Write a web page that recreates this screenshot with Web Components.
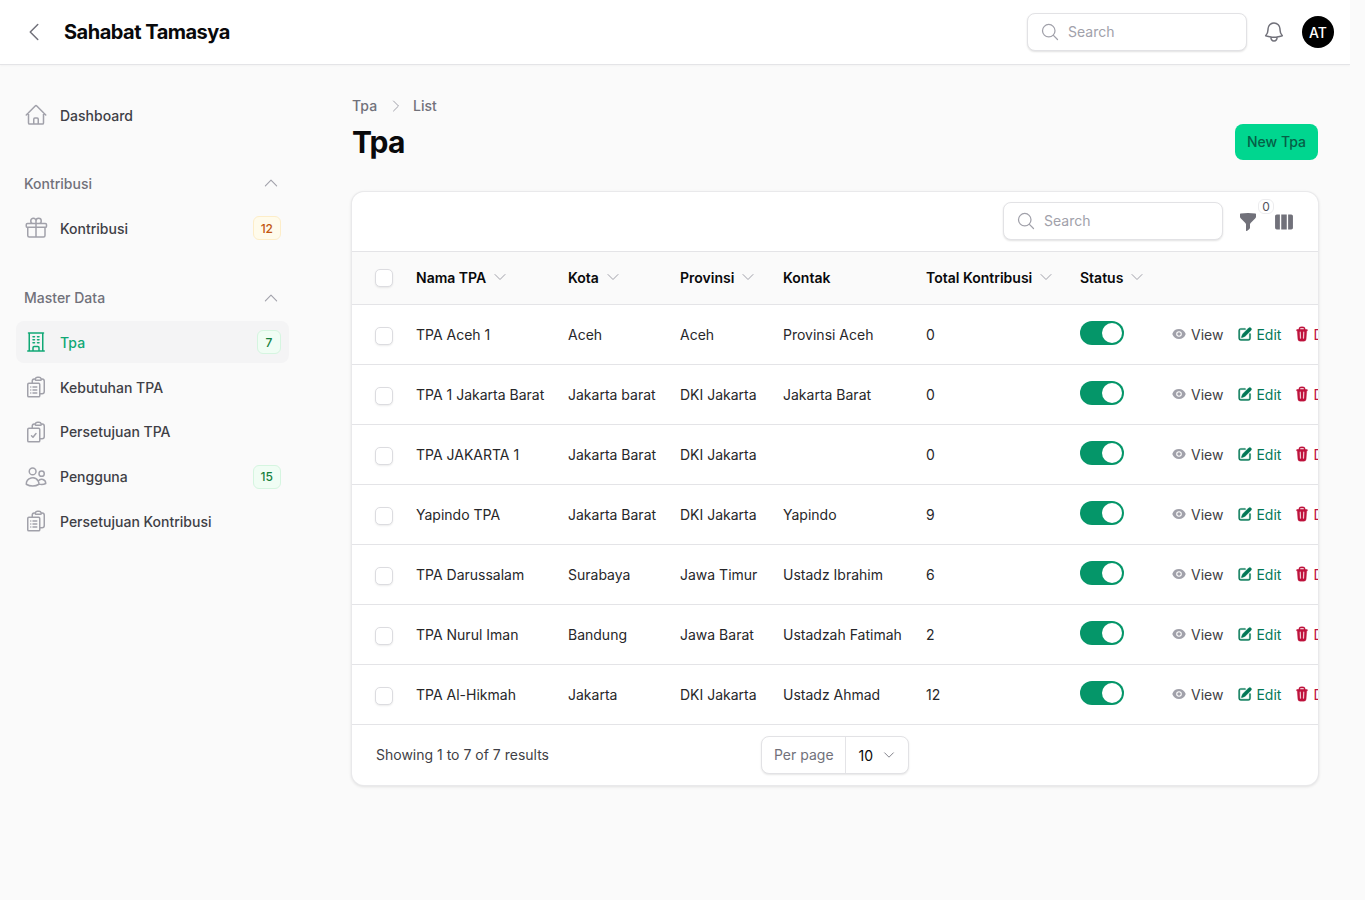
<!DOCTYPE html>
<html lang="id">
<head>
<meta charset="utf-8">
<title>Tpa</title>
<style>
  html, body { margin: 0; padding: 0; background: #fafafa; }
  body { font-family: Inter, "Liberation Sans", sans-serif; font-size: 14px; color: #09090b; width: 1350px; overflow: hidden; height: 900px; }
</style>
</head>
<body>
<app-shell>
  <top-bar slot="top" brand="Sahabat Tamasya" initials="AT"></top-bar>
  <side-nav slot="side">
    <nav-item icon="home" style="margin-bottom:25px">Dashboard</nav-item>
    <nav-group label="Kontribusi">
      <nav-item icon="gift" badge="12" tone="warn" style="margin-top:.5px;margin-bottom:2.25px">Kontribusi</nav-item>
    </nav-group>
    <nav-group label="Master Data">
      <nav-item icon="office" badge="7" tone="ok" active>Tpa</nav-item>
      <nav-item icon="cliplist">Kebutuhan TPA</nav-item>
      <nav-item icon="clipcheck">Persetujuan TPA</nav-item>
      <nav-item icon="users" badge="15" tone="ok">Pengguna</nav-item>
      <nav-item icon="cliplist">Persetujuan Kontribusi</nav-item>
    </nav-group>
  </side-nav>
  <page-head title-text="Tpa" action="New Tpa"></page-head>
  <tpa-table>
    <tpa-row nama="TPA Aceh 1" kota="Aceh" provinsi="Aceh" kontak="Provinsi Aceh" total="0"></tpa-row>
    <tpa-row nama="TPA 1 Jakarta Barat" kota="Jakarta barat" provinsi="DKI Jakarta" kontak="Jakarta Barat" total="0"></tpa-row>
    <tpa-row nama="TPA JAKARTA 1" kota="Jakarta Barat" provinsi="DKI Jakarta" kontak="" total="0"></tpa-row>
    <tpa-row nama="Yapindo TPA" kota="Jakarta Barat" provinsi="DKI Jakarta" kontak="Yapindo" total="9"></tpa-row>
    <tpa-row nama="TPA Darussalam" kota="Surabaya" provinsi="Jawa Timur" kontak="Ustadz Ibrahim" total="6"></tpa-row>
    <tpa-row nama="TPA Nurul Iman" kota="Bandung" provinsi="Jawa Barat" kontak="Ustadzah Fatimah" total="2"></tpa-row>
    <tpa-row nama="TPA Al-Hikmah" kota="Jakarta" provinsi="DKI Jakarta" kontak="Ustadz Ahmad" total="12"></tpa-row>
  </tpa-table>
</app-shell>

<script>
const ICONS = {
  home: ["o", "m2.25 12 8.954-8.955c.44-.439 1.152-.439 1.591 0L21.75 12M4.5 9.75v10.125c0 .621.504 1.125 1.125 1.125H9.75v-4.875c0-.621.504-1.125 1.125-1.125h2.25c.621 0 1.125.504 1.125 1.125V21h4.125c.621 0 1.125-.504 1.125-1.125V9.75M8.25 21h8.25"],
  gift: ["o", "M21 11.25v8.25a1.5 1.5 0 0 1-1.5 1.5H5.25a1.5 1.5 0 0 1-1.5-1.5v-8.25M12 4.875A2.625 2.625 0 1 0 9.375 7.5H12m0-2.625V7.5m0-2.625A2.625 2.625 0 1 1 14.625 7.5H12m0 0V21m-8.625-9.75h18c.621 0 1.125-.504 1.125-1.125v-1.5c0-.621-.504-1.125-1.125-1.125h-18c-.621 0-1.125.504-1.125 1.125v1.5c0 .621.504 1.125 1.125 1.125Z"],
  office: ["o", "M3.75 21h16.5M4.5 3h15M5.25 3v18m13.5-18v18M9 6.75h1.5m-1.5 3h1.5m-1.5 3h1.5m3-6H15m-1.5 3H15m-1.5 3H15M9 21v-3.375c0-.621.504-1.125 1.125-1.125h3.75c.621 0 1.125.504 1.125 1.125V21"],
  cliplist: ["o", "M9 12h3.75M9 15h3.75M9 18h3.75m3 .75H18a2.25 2.25 0 0 0 2.25-2.25V6.108c0-1.135-.845-2.098-1.976-2.192a48.424 48.424 0 0 0-1.123-.08m-5.801 0c-.065.21-.1.433-.1.664 0 .414.336.75.75.75h4.5a.75.75 0 0 0 .75-.75 2.25 2.25 0 0 0-.1-.664m-5.8 0A2.251 2.251 0 0 1 13.5 2.25H15c1.012 0 1.867.668 2.15 1.586m-5.8 0c-.376.023-.75.05-1.124.08C9.095 4.01 8.25 4.973 8.25 6.108V8.25m0 0H4.875c-.621 0-1.125.504-1.125 1.125v11.25c0 .621.504 1.125 1.125 1.125h9.75c.621 0 1.125-.504 1.125-1.125V9.375c0-.621-.504-1.125-1.125-1.125H8.25ZM6.75 12h.008v.008H6.75V12Zm0 3h.008v.008H6.75V15Zm0 3h.008v.008H6.75V18Z"],
  clipcheck: ["o", "M11.35 3.836c-.065.21-.1.433-.1.664 0 .414.336.75.75.75h4.5a.75.75 0 0 0 .75-.75 2.25 2.25 0 0 0-.1-.664m-5.8 0A2.251 2.251 0 0 1 13.5 2.25H15c1.012 0 1.867.668 2.15 1.586m-5.8 0c-.376.023-.75.05-1.124.08C9.095 4.01 8.25 4.973 8.25 6.108V8.25m8.9-4.414c.376.023.75.05 1.124.08 1.131.094 1.976 1.057 1.976 2.192V16.5A2.25 2.25 0 0 1 18 18.75h-2.25m-7.5-10.5H4.875c-.621 0-1.125.504-1.125 1.125v11.25c0 .621.504 1.125 1.125 1.125h9.75c.621 0 1.125-.504 1.125-1.125V18.75m-7.5-10.5h6.375c.621 0 1.125.504 1.125 1.125v9.375m-8.25-3 1.5 1.5 3-3.75"],
  users: ["o", "M15 19.128a9.38 9.38 0 0 0 2.625.372 9.337 9.337 0 0 0 4.121-.952 4.125 4.125 0 0 0-7.533-2.493M15 19.128v-.003c0-1.113-.285-2.16-.786-3.07M15 19.128v.106A12.318 12.318 0 0 1 8.624 21c-2.331 0-4.512-.645-6.374-1.766l-.001-.109a6.375 6.375 0 0 1 11.964-3.07M12 6.375a3.375 3.375 0 1 1-6.75 0 3.375 3.375 0 0 1 6.75 0Zm8.25 2.25a2.625 2.625 0 1 1-5.25 0 2.625 2.625 0 0 1 5.25 0Z"],
  bell: ["o", "M14.857 17.082a23.848 23.848 0 0 0 5.454-1.31A8.967 8.967 0 0 1 18 9.75V9A6 6 0 0 0 6 9v.75a8.967 8.967 0 0 1-2.312 6.022c1.733.64 3.56 1.085 5.455 1.31m5.714 0a24.255 24.255 0 0 1-5.714 0m5.714 0a3 3 0 1 1-5.714 0"],
  search: ["o", "m21 21-5.197-5.197m0 0A7.5 7.5 0 1 0 5.196 5.196a7.5 7.5 0 0 0 10.607 10.607Z"],
  back: ["o", "M15.75 19.5 8.25 12l7.5-7.5"],
  right: ["o", "m8.25 4.5 7.5 7.5-7.5 7.5"],
  up: ["o", "m4.5 15.75 7.5-7.5 7.5 7.5"],
  down: ["o", "m19.5 8.25-7.5 7.5-7.5-7.5"],
  funnel: ["s", "M2.628 1.601C5.028 1.206 7.49 1 10 1s4.973.206 7.372.601a.75.75 0 0 1 .628.74v2.288a2.25 2.25 0 0 1-.659 1.59l-4.682 4.683a2.25 2.25 0 0 0-.659 1.59v3.037c0 .684-.31 1.33-.844 1.757l-1.937 1.55A.75.75 0 0 1 8 18.25v-5.757a2.25 2.25 0 0 0-.659-1.591L2.659 6.22A2.25 2.25 0 0 1 2 4.629V2.34a.75.75 0 0 1 .628-.74Z", "0 0 20 20"],
  columns: ["s", "M15 3.75H9v16.5h6V3.75ZM16.5 20.25h3.375c1.035 0 1.875-.84 1.875-1.875V5.625c0-1.036-.84-1.875-1.875-1.875H16.5v16.5ZM4.125 3.75H7.5v16.5H4.125a1.875 1.875 0 0 1-1.875-1.875V5.625c0-1.036.84-1.875 1.875-1.875Z", "0 0 24 24"],
  eye: ["s", "M10 12.5a2.5 2.5 0 1 0 0-5 2.5 2.5 0 0 0 0 5ZM.664 10.59a1.651 1.651 0 0 1 0-1.186A10.004 10.004 0 0 1 10 3c4.257 0 7.893 2.66 9.336 6.41.147.381.146.804 0 1.186A10.004 10.004 0 0 1 10 17c-4.257 0-7.893-2.66-9.336-6.41ZM14 10a4 4 0 1 1-8 0 4 4 0 0 1 8 0Z", "0 0 20 20"],
  edit: ["s", "m5.433 13.917 1.262-3.155A4 4 0 0 1 7.58 9.42l6.92-6.918a2.121 2.121 0 0 1 3 3l-6.92 6.918c-.383.383-.84.685-1.343.886l-3.154 1.262a.5.5 0 0 1-.65-.65ZM3.5 5.75c0-.69.56-1.25 1.25-1.25H10A.75.75 0 0 0 10 3H4.75A2.75 2.75 0 0 0 2 5.75v9.5A2.75 2.75 0 0 0 4.75 18h9.5A2.75 2.75 0 0 0 17 15.25V10a.75.75 0 0 0-1.5 0v5.25c0 .69-.56 1.25-1.25 1.25h-9.5c-.69 0-1.25-.56-1.25-1.25v-9.5Z", "0 0 20 20"],
  trash: ["s", "M8.75 1A2.75 2.75 0 0 0 6 3.75v.443c-.795.077-1.584.176-2.365.298a.75.75 0 1 0 .23 1.482l.149-.022.841 10.518A2.75 2.75 0 0 0 7.596 19h4.807a2.75 2.75 0 0 0 2.742-2.53l.841-10.52.149.023a.75.75 0 0 0 .23-1.482A41.03 41.03 0 0 0 14 4.193V3.75A2.75 2.75 0 0 0 11.25 1h-2.5ZM10 4c.84 0 1.673.025 2.5.075V3.75c0-.69-.56-1.25-1.25-1.25h-2.5c-.69 0-1.25.56-1.25 1.25v.325C8.327 4.025 9.16 4 10 4ZM8.58 7.72a.75.75 0 0 0-1.5.06l.3 7.5a.75.75 0 1 0 1.5-.06l-.3-7.5Zm4.34.06a.75.75 0 1 0-1.5-.06l-.3 7.5a.75.75 0 1 0 1.5.06l.3-7.5Z", "0 0 20 20"]
};

// columns of the table, shared by the header and the rows
const COLS = "64px 152px 112px 103px 143px 154px 93px 200px";

class UiIcon extends HTMLElement {
  connectedCallback() {
    const [kind, d, box] = ICONS[this.getAttribute("name")];
    const size = this.getAttribute("size") || 24;
    const bold = this.getAttribute("bold");
    const paint = kind === "o"
      ? `fill="none" stroke="currentColor" stroke-width="${this.getAttribute("sw") || 1.5}" stroke-linecap="round" stroke-linejoin="round"`
      : `fill="currentColor" fill-rule="evenodd" clip-rule="evenodd"${bold ? ` stroke="currentColor" stroke-width="${bold}"` : ""}`;
    this.attachShadow({ mode: "open" }).innerHTML = `
      <style>:host { display: inline-flex; flex: none; width: ${size}px; height: ${size}px; } svg { width: 100%; height: 100%; display: block; }</style>
      <svg viewBox="${box || "0 0 24 24"}" ${paint}><path d="${d}"/></svg>`;
  }
}

class SearchBox extends HTMLElement {
  connectedCallback() {
    this.attachShadow({ mode: "open" }).innerHTML = `
      <style>
        :host { display: flex; align-items: center; box-sizing: border-box; width: 220px; height: 38px; padding: 0 12px; gap: 8px; background: #fff; border: 1px solid #e2e2e5; border-radius: 8px; box-shadow: 0 1px 2px rgba(0,0,0,.12); color: #a1a1aa; }
        ui-icon { color: #a1a1aa; }
        span { font-size: 14px; color: #a1a1aa; margin-bottom: 2px; }
      </style>
      <ui-icon name="search" size="20"></ui-icon><span>Search</span>`;
  }
}

class TopBar extends HTMLElement {
  connectedCallback() {
    this.attachShadow({ mode: "open" }).innerHTML = `
      <style>
        :host { display: flex; align-items: center; box-sizing: border-box; height: 65px; padding: 0 16px 0 22px; background: #fff; border-bottom: 1px solid #e4e4e7; box-shadow: 0 1px 2px rgba(0,0,0,.03); }
        .back { color: #71717a; margin-right: 18px; }
        b { font-size: 20px; font-weight: 700; color: #09090b; letter-spacing: -.5px; }
        search-box { margin-left: auto; }
        .bell { color: #71717a; margin: 0 16px 0 15px; }
        .av { width: 32px; height: 32px; border-radius: 50%; background: #000; color: #fff; font-size: 14px; font-weight: 500; display: flex; align-items: center; justify-content: center; }
      </style>
      <ui-icon class="back" name="back" size="24"></ui-icon>
      <b>${this.getAttribute("brand")}</b>
      <search-box></search-box>
      <ui-icon class="bell" name="bell" size="24"></ui-icon>
      <div class="av">${this.getAttribute("initials")}</div>`;
  }
}

class SideNav extends HTMLElement {
  connectedCallback() {
    this.attachShadow({ mode: "open" }).innerHTML = `
      <style>:host { display: flex; flex-direction: column; box-sizing: border-box; width: 305px; padding: 29px 16px 0; flex: none; }</style>
      <slot></slot>`;
  }
}

class NavGroup extends HTMLElement {
  connectedCallback() {
    this.attachShadow({ mode: "open" }).innerHTML = `
      <style>
        :host { display: flex; flex-direction: column; margin-bottom: 24px; }
        .head { display: flex; justify-content: space-between; align-items: center; height: 44px; padding: 0 8px; color: #71717a; font-size: 14px; font-weight: 500; margin-bottom: 1.75px; }
        ui-icon { color: #a1a1aa; margin-right: 1px; }
      </style>
      <div class="head"><span>${this.getAttribute("label")}</span><ui-icon name="up" size="18"></ui-icon></div>
      <slot></slot>`;
  }
}

class NavItem extends HTMLElement {
  connectedCallback() {
    const badge = this.getAttribute("badge");
    const tone = this.getAttribute("tone");
    const tones = {
      warn: "color:#c2560f;background:#fffbeb;border-color:#fdedc8",
      ok: "color:#15803d;background:#f0fdf4;border-color:#d5f5e0"
    };
    const active = this.hasAttribute("active");
    this.attachShadow({ mode: "open" }).innerHTML = `
      <style>
        :host { display: flex; align-items: center; box-sizing: border-box; height: 42px; margin-bottom: 2.75px; padding: 0 8px; gap: 12px; border-radius: 8px; color: #3f3f46; font-size: 14px; font-weight: 500; ${active ? "background:#f4f4f5;color:#10a875;" : ""} }
        ui-icon { color: ${active ? "#10a875" : "#a1a1aa"}; }
        .text { flex: 1; }
        .badge { box-sizing: border-box; min-width: 24px; height: 24px; padding: 0 7px; border: 1px solid; border-radius: 6px; font-size: 12px; font-weight: 500; display: flex; align-items: center; justify-content: center; ${tones[tone] || ""} }
      </style>
      <ui-icon name="${this.getAttribute("icon")}" size="24"></ui-icon>
      <span class="text"><slot></slot></span>
      ${badge ? `<span class="badge">${badge}</span>` : ""}`;
  }
}

class PageHead extends HTMLElement {
  connectedCallback() {
    const title = this.getAttribute("title-text");
    this.attachShadow({ mode: "open" }).innerHTML = `
      <style>
        :host { display: flex; justify-content: space-between; align-items: flex-end; height: 65px; margin-bottom: 31px; }
        .crumbs { display: flex; align-items: center; height: 20px; color: #71717a; font-size: 14px; font-weight: 500; margin-bottom: 9px; }
        .crumbs span { margin-bottom: 2px; }
        .crumbs ui-icon { color: #a1a1aa; margin: 0 9px 0 11px; }
        h1 { margin: -1px 0 1px; font-size: 30px; line-height: 36px; font-weight: 700; letter-spacing: -.75px; color: #09090b; }
        .btn { height: 36px; padding: 0 12px; box-sizing: border-box; display: flex; align-items: center; background: #00d68f; color: #065f46; border-radius: 8px; font-size: 14px; font-weight: 500; margin-bottom: 1px; }
        .btn span { margin-bottom: 2px; }
      </style>
      <div>
        <div class="crumbs"><span>${title}</span><ui-icon name="right" size="16"></ui-icon><span>List</span></div>
        <h1>${title}</h1>
      </div>
      <div class="btn"><span>${this.getAttribute("action")}</span></div>`;
  }
}

class TpaCheck extends HTMLElement {
  connectedCallback() {
    this.attachShadow({ mode: "open" }).innerHTML = `
      <style>:host { display: block; box-sizing: border-box; width: 18px; height: 18px; background: #fff; border: 1px solid #dcdce0; border-radius: 5px; box-shadow: 0 1px 2px rgba(0,0,0,.08); }</style>`;
  }
}

class TpaTable extends HTMLElement {
  connectedCallback() {
    const heads = [["Nama TPA", 1], ["Kota", 1], ["Provinsi", 1], ["Kontak", 0], ["Total Kontribusi", 1], ["Status", 1]];
    this.attachShadow({ mode: "open" }).innerHTML = `
      <style>
        :host { display: block; background: #fff; border-radius: 12px; box-shadow: 0 0 0 1px #e9e9eb, 0 1px 3px 1px rgba(0,0,0,.1); overflow: hidden; }
        .tools { display: flex; align-items: center; justify-content: flex-end; height: 60px; padding-right: 23px; border-bottom: 1px solid #e4e4e7; box-sizing: border-box; }
        .tools search-box { margin-bottom: 1px; }
        .tools .f { position: relative; color: #71717a; margin-left: 15px; width: 20px; height: 20px; }
        .tools .c { color: #71717a; margin-left: 15px; }
        .count { position: absolute; top: -13px; left: 20px; min-width: 16px; height: 15px; box-sizing: border-box; background: #fff; border: 1px solid #ececee; border-radius: 6px; font-size: 12px; line-height: 13px; text-align: center; color: #52525b; }
        .head { display: grid; grid-template-columns: ${COLS}; align-items: center; height: 53px; background: #fafafa; border-bottom: 1px solid #e4e4e7; box-sizing: border-box; font-weight: 600; font-size: 14px; color: #09090b; }
        .head span { display: flex; align-items: center; gap: 6px; margin-bottom: 2px; }
        .head ui-icon { color: #a1a1aa; }
        .head tpa-check { margin-left: 23px; }
        .foot { position: relative; display: flex; align-items: center; height: 60px; padding: 0 24px; font-size: 14px; color: #3f3f46; }
        .foot > span { margin-bottom: 2px; }
        .pager { position: absolute; left: 409px; top: 11px; display: flex; align-items: center; box-sizing: border-box; height: 38px; background: #fff; border: 1px solid #e2e2e5; border-radius: 8px; box-shadow: 0 1px 2px rgba(0,0,0,.1); }
        .pager .l { box-sizing: border-box; padding: 0 11px 2px 12px; color: #71717a; height: 100%; display: flex; align-items: center; border-right: 1px solid #e4e4e7; }
        .pager .v { padding: 0 12px 0 13px; color: #09090b; display: flex; align-items: center; gap: 9px; }
        .pager ui-icon { color: #71717a; }
      </style>
      <div class="tools">
        <search-box></search-box>
        <div class="f"><ui-icon name="funnel" size="20"></ui-icon><span class="count">0</span></div>
        <ui-icon class="c" name="columns" size="22"></ui-icon>
      </div>
      <div class="head">
        <tpa-check></tpa-check>
        ${heads.map(([t, s]) => `<span>${t}${s ? '<ui-icon name="down" size="16"></ui-icon>' : ""}</span>`).join("")}
      </div>
      <slot></slot>
      <div class="foot">
        <span>Showing 1 to 7 of 7 results</span>
        <div class="pager"><span class="l">Per page</span><span class="v">10<ui-icon name="down" size="14"></ui-icon></span></div>
      </div>`;
  }
}

class TpaRow extends HTMLElement {
  connectedCallback() {
    const a = n => this.getAttribute(n);
    this.attachShadow({ mode: "open" }).innerHTML = `
      <style>
        :host { display: grid; grid-template-columns: ${COLS}; align-items: center; box-sizing: border-box; height: 60px; border-bottom: 1px solid #e4e4e7; font-size: 14px; color: #27272a; white-space: nowrap; }
        tpa-check { margin-left: 23px; margin-top: 2px; }
        span { margin-bottom: 1px; }
        .toggle { box-sizing: border-box; width: 44px; height: 24px; margin-top: -4px; padding: 2px; border-radius: 12px; background: #059669; display: flex; justify-content: flex-end; }
        .toggle i { display: block; width: 20px; height: 20px; border-radius: 50%; background: #fff; }
        .acts { display: flex; align-items: center; gap: 12px; margin-bottom: 1px; }
        .act { display: flex; align-items: center; gap: 4px; }
        .act span { margin: 0; }
        .view { color: #3f3f46; } .view ui-icon { color: #a1a1aa; margin: 0 1px 0 -1px; }
        .edit { color: #047857; margin-left: 1px; }
        .edit ui-icon { margin-left: 1px; margin-right: -1px; }
        .del { color: #be123c; }
        .del ui-icon { margin-left: 1px; margin-right: -1px; }
      </style>
      <tpa-check></tpa-check>
      <span>${a("nama")}</span><span>${a("kota")}</span><span>${a("provinsi")}</span><span>${a("kontak")}</span><span>${a("total")}</span>
      <div class="toggle"><i></i></div>
      <div class="acts">
        <div class="act view"><ui-icon name="eye" size="14"></ui-icon><span>View</span></div>
        <div class="act edit"><ui-icon name="edit" size="16" bold=".5"></ui-icon><span>Edit</span></div>
        <div class="act del"><ui-icon name="trash" size="16" bold=".4"></ui-icon><span>Delete</span></div>
      </div>`;
  }
}

class AppShell extends HTMLElement {
  connectedCallback() {
    this.attachShadow({ mode: "open" }).innerHTML = `
      <style>
        :host { display: block; }
        .body { display: flex; }
        main { padding: 31px 32px 0 47px; flex: 1; min-width: 0; }
      </style>
      <slot name="top"></slot>
      <div class="body">
        <slot name="side"></slot>
        <main><slot></slot></main>
      </div>`;
  }
}

customElements.define("ui-icon", UiIcon);
customElements.define("search-box", SearchBox);
customElements.define("top-bar", TopBar);
customElements.define("side-nav", SideNav);
customElements.define("nav-group", NavGroup);
customElements.define("nav-item", NavItem);
customElements.define("page-head", PageHead);
customElements.define("tpa-check", TpaCheck);
customElements.define("tpa-table", TpaTable);
customElements.define("tpa-row", TpaRow);
customElements.define("app-shell", AppShell);
</script>
</body>
</html>
